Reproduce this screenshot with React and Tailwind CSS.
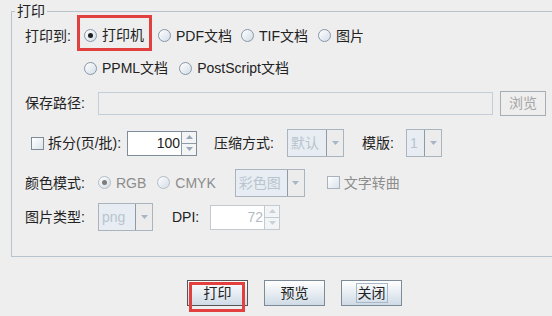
import React from 'react';

const FONT = { fontFamily: '"Liberation Sans", "Noto Sans CJK SC", sans-serif' };

const Radio = ({ checked, disabled }) => (
  <span
    className={`flex h-[13px] w-[13px] shrink-0 items-center justify-center rounded-full border bg-gradient-to-br from-white to-[#d3dde7] ${
      disabled ? 'border-[#b3bcc5]' : 'border-[#8796a6]'
    }`}
  >
    {checked && (
      <span className={`h-[5px] w-[5px] rounded-full ${disabled ? 'bg-[#7d7d7d]' : 'bg-[#1e1e1e]'}`} />
    )}
  </span>
);

const Option = ({ label, checked, disabled, className = '' }) => (
  <div className={`flex items-center gap-[5px] ${className}`}>
    <Radio checked={checked} disabled={disabled} />
    <span className={disabled ? 'text-[#8c8c8c]' : 'text-[#222]'}>{label}</span>
  </div>
);

const Check = ({ disabled }) => (
  <span
    className={`h-[13px] w-[13px] shrink-0 border bg-gradient-to-br from-white to-[#dbe3eb] ${
      disabled ? 'border-[#a9b3bd]' : 'border-[#7d8b99]'
    }`}
  />
);

const Tri = ({ up, color = '#8a9aab' }) => (
  <svg width="7" height="4" viewBox="0 0 7 4">
    <path d={up ? 'M0 4 L3.5 0 L7 4 Z' : 'M0 0 L3.5 4 L7 0 Z'} fill={color} />
  </svg>
);

const Combo = ({ value, w }) => (
  <div className={`flex h-[28px] ${w} border border-[#a9b4bf]`}>
    <div className="flex flex-1 items-center border-r border-[#8e9aa6] bg-[#e7edf3] pl-[3px] text-[#b9c4ce]">
      {value}
    </div>
    <div className="flex w-[16px] items-center justify-center bg-[#ececec]">
      <Tri color="#a6b6c6" />
    </div>
  </div>
);

const Spinner = ({ value, w, disabled }) => (
  <div className={`flex h-[25px] ${w} border ${disabled ? 'border-[#c2cad2]' : 'border-[#7f8d9b]'} bg-white`}>
    <div className={`flex flex-1 items-center justify-end pr-[1px] ${disabled ? 'text-[#b3bcc5]' : 'text-[#222]'}`}>
      {value}
    </div>
    <div className={`flex w-[15px] flex-col border-l ${disabled ? 'border-[#c2cad2]' : 'border-[#8e9aa6]'} bg-[#f2f4f6]`}>
      <div className={`flex flex-1 items-center justify-center border-b ${disabled ? 'border-[#c2cad2]' : 'border-[#8e9aa6]'}`}>
        <Tri up color={disabled ? '#c9d1d8' : '#9aa8b6'} />
      </div>
      <div className="flex flex-1 items-center justify-center">
        <Tri color={disabled ? '#c9d1d8' : '#9aa8b6'} />
      </div>
    </div>
  </div>
);

const Btn = ({ children, focused, marked, focusText }) => (
  <button
    className={`relative flex h-[26px] w-[61px] items-center justify-center border bg-gradient-to-b from-white to-[#cfdbe6] text-[#222] ${
      focused ? 'border-[#555]' : 'border-[#7d8b99]'
    }`}
  >
    <span className={focusText ? 'border border-[#a8b8c8] px-[1px] leading-[18px]' : ''}>{children}</span>
    {marked && <span className="absolute left-[1px] right-[2px] top-[1px] -bottom-[7px] border-[3px] border-[#e23f3f]" />}
  </button>
);

export default function App() {
  return (
    <div className="h-[316px] w-[552px] overflow-hidden bg-[#eeeeee] text-[14px] leading-[16px]" style={FONT}>
      <fieldset className="ml-[11px] mt-[3px] w-[560px] border border-[#b7c3cd]">
        <legend className="ml-[3px] px-[2px] text-[#222]">打印</legend>
        <div className="pl-[13px] pb-[22px]">
          {/* 打印到 */}
          <div className="-mt-[4px] flex h-[36px] items-stretch">
            <div className="flex w-[52px] items-center pt-[5px] text-[#222]">打印到:</div>
            <div className="flex items-center border-[3px] border-[#e23f3f] pl-[4px] pr-[5px] pt-[4px]">
              <Option label="打印机" checked />
            </div>
            <div className="flex items-center pt-[5px]">
              <Option label="PDF文档" className="ml-[6px]" />
              <Option label="TIF文档" className="ml-[9px]" />
              <Option label="图片" className="ml-[10px]" />
            </div>
          </div>
          <div className="flex h-[34px] items-center pl-[59px]">
            <Option label="PPML文档" />
            <Option label="PostScript文档" className="ml-[11px]" />
          </div>

          {/* 保存路径 */}
          <div className="flex h-[36px] items-center">
            <div className="w-[73px] text-[#222]">保存路径:</div>
            <div className="h-[23px] w-[395px] border border-[#c3ced8] bg-[#eeeeee]" />
            <div className="ml-[7px] flex h-[25px] w-[46px] items-center justify-center border border-[#a6adb3] bg-[#eeeeee] text-[#a5a5a5]">
              浏览
            </div>
          </div>

          {/* 拆分 */}
          <div className="flex h-[44px] items-center">
            <div className="ml-[6px] flex items-center gap-[4px] text-[#222]">
              <Check />
              <span>拆分(页/批):</span>
            </div>
            <div className="ml-[6px]">
              <Spinner value="100" w="w-[70px]" />
            </div>
            <div className="ml-[17px] w-[73px] text-[#222]">压缩方式:</div>
            <Combo value="默认" w="w-[57px]" />
            <div className="ml-[18px] w-[44px] text-[#222]">模版:</div>
            <Combo value="1" w="w-[36px]" />
          </div>

          {/* 颜色模式 */}
          <div className="flex h-[35px] items-center">
            <div className="w-[73px] text-[#222]">颜色模式:</div>
            <Option label="RGB" checked disabled />
            <Option label="CMYK" disabled className="ml-[11px]" />
            <div className="ml-[19px]">
              <Combo value="彩色图" w="w-[70px]" />
            </div>
            <div className="ml-[22px] flex items-center gap-[4px] text-[#8c8c8c]">
              <Check disabled />
              <span>文字转曲</span>
            </div>
          </div>

          {/* 图片类型 */}
          <div className="flex h-[34px] items-center">
            <div className="w-[73px] text-[#222]">图片类型:</div>
            <Combo value="png" w="w-[55px]" />
            <div className="ml-[19px] w-[38px] text-[#222]">DPI:</div>
            <Spinner value="72" w="w-[70px]" disabled />
          </div>
        </div>
      </fieldset>

      <div className="mt-[23px] flex gap-[16px] pl-[187px]">
        <Btn focused marked>打印</Btn>
        <Btn>预览</Btn>
        <Btn focusText>关闭</Btn>
      </div>
    </div>
  );
}
